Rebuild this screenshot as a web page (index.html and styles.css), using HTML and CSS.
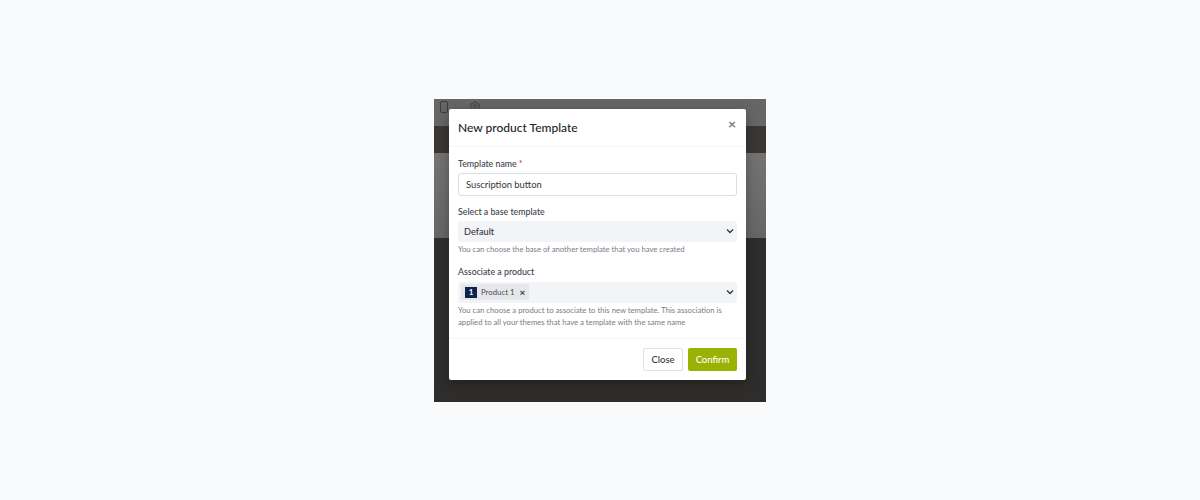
FILE: index.html
```html
<!DOCTYPE html>
<html lang="en">
<head>
    <meta charset="utf-8">
    <title>New product Template</title>
    <link rel="stylesheet" href="styles.css">
</head>
<body>
    <div class="shot">
        <div class="band band-top">
            <svg class="top-icon phone" width="10" height="12" viewBox="0 0 10 12"><rect x="1.5" y="0.5" width="7" height="11" rx="1.5" fill="none" stroke="#3d3d3d"/></svg>
            <svg class="top-icon camera" width="10" height="9" viewBox="0 0 12 10"><path d="M1 3h2.500l1-2h3l1 2h2.500v7h-10z" fill="none" stroke="#3d3d3d"/><circle cx="6" cy="6" r="2" fill="none" stroke="#3d3d3d"/></svg>
        </div>
        <div class="band band-dark"></div>
        <div class="band band-grey"></div>
        <div class="band band-bottom"></div>

        <div class="modal">
            <div class="modal-header">
                <h1>New product Template</h1>
                <span class="close-x">×</span>
            </div>
            <div class="modal-body">
                <div class="field">
                    <label>Template name<span class="req">*</span></label>
                    <div class="input">Suscription button</div>
                </div>
                <div class="field">
                    <label>Select a base template</label>
                    <div class="select">
                        <span>Default</span>
                        <svg class="chevron" width="8" height="6" viewBox="0 0 8 6"><path d="M1 1.500l3 3 3-3" fill="none" stroke="#333" stroke-width="1.300"/></svg>
                    </div>
                    <p class="help">You can choose the base of another template that you have created</p>
                </div>
                <div class="field">
                    <label>Associate a product</label>
                    <div class="select select-tags">
                        <span class="tag"><b class="tag-num">1</b>Product 1<i class="tag-x">×</i></span>
                        <svg class="chevron" width="8" height="6" viewBox="0 0 8 6"><path d="M1 1.500l3 3 3-3" fill="none" stroke="#333" stroke-width="1.300"/></svg>
                    </div>
                    <p class="help">You can choose a product to associate to this new template. This association is applied to all your themes that have a template with the same name</p>
                </div>
            </div>
            <div class="modal-footer">
                <button class="btn btn-close">Close</button>
                <button class="btn btn-confirm">Confirm</button>
            </div>
        </div>
    </div>
</body>
</html>
```

FILE: styles.css
```css
* {
    box-sizing: border-box;
    margin: 0;
    padding: 0;
    font-family: Lato, "Liberation Sans", sans-serif;
}
body {
    background-color: #f9fafc;
    color: #23262b;
    height: 500px;
    overflow: hidden;
    padding-top: 99px;
}
.shot {
    position: relative;
    width: 332px;
    height: 303px;
    margin: 0 auto;
    display: flex;
    flex-direction: column;
}
.band-top {
    height: 27px;
    background-color: #666666;
    display: flex;
    align-items: flex-start;
    gap: 21px;
    padding: 2px 0 0 5px;
}
.band-dark {
    height: 27px;
    background-color: #3b3734;
}
.band-grey {
    height: 85px;
    background: linear-gradient(#737373, #666666);
}
.band-bottom {
    flex: 1;
    background-color: #2e2d2b;
}
.modal {
    position: absolute;
    left: 15px;
    top: 10px;
    width: 297px;
    height: 271px;
    background-color: #ffffff;
    border-radius: 2px;
    box-shadow: 0 3px 12px rgba(0, 0, 0, 0.3);
    display: flex;
    flex-direction: column;
}
.modal-header {
    flex: none;
    height: 38px;
    padding: 0 9px;
    border-bottom: 1px solid #f3f4f6;
    display: flex;
    align-items: center;
    justify-content: space-between;
}
h1 {
    font-size: 12px;
    font-weight: 500;
    color: #22252a;
}
.close-x {
    font-size: 14px;
    font-weight: 700;
    color: #777c85;
    margin-top: -8px;
    margin-right: 1px;
}
.modal-body {
    flex: 1;
    padding: 11px 9px 0;
}
.field {
    margin-bottom: 10px;
}
.field + .field + .field {
    margin-top: 11px;
}
label {
    display: block;
    font-size: 8.800px;
    font-weight: 500;
    color: #3c4047;
    line-height: 12px;
    margin-bottom: 3px;
}
.req {
    color: #d9304f;
    margin-left: 2px;
}
.input {
    height: 23px;
    border: 1px solid #d9dee5;
    border-radius: 3px;
    font-size: 9.400px;
    color: #33373d;
    padding: 0 7px 1px;
    display: flex;
    align-items: center;
}
.select {
    height: 21px;
    background-color: #f3f4f8;
    border-radius: 3px;
    font-size: 9.200px;
    font-weight: 500;
    color: #33373d;
    padding: 0 3px 1px 6px;
    display: flex;
    align-items: center;
    justify-content: space-between;
}
.select-tags {
    margin-top: 4px;
    padding: 0 3px 1px;
}
.tag {
    height: 16px;
    background-color: #e6e7ea;
    border-radius: 2px;
    display: flex;
    align-items: center;
    font-size: 7.800px;
    font-weight: 400;
    color: #4a4e55;
    padding: 0 4px;
}
.tag-num {
    width: 12px;
    height: 11px;
    background-color: #0e2350;
    color: #ffffff;
    font-size: 8px;
    font-weight: 700;
    display: flex;
    align-items: center;
    justify-content: center;
    margin-right: 4px;
}
.tag-x {
    font-style: normal;
    font-weight: 700;
    font-size: 10px;
    color: #33373d;
    margin-left: 5px;
}
.help {
    font-size: 7.700px;
    line-height: 12px;
    color: #767c86;
    margin-top: 1px;
}
.modal-footer {
    flex: none;
    height: 42px;
    border-top: 1px solid #f3f4f6;
    padding: 9px 9px 0;
    display: flex;
    justify-content: flex-end;
    gap: 5px;
}
.btn {
    height: 23px;
    border-radius: 2px;
    font-size: 9.500px;
    font-weight: 500;
}
.btn-close {
    width: 40px;
    background-color: #ffffff;
    border: 1px solid #dfe2e8;
    color: #33373d;
}
.btn-confirm {
    width: 49px;
    background-color: #99b204;
    border: none;
    color: #ffffff;
}
```
